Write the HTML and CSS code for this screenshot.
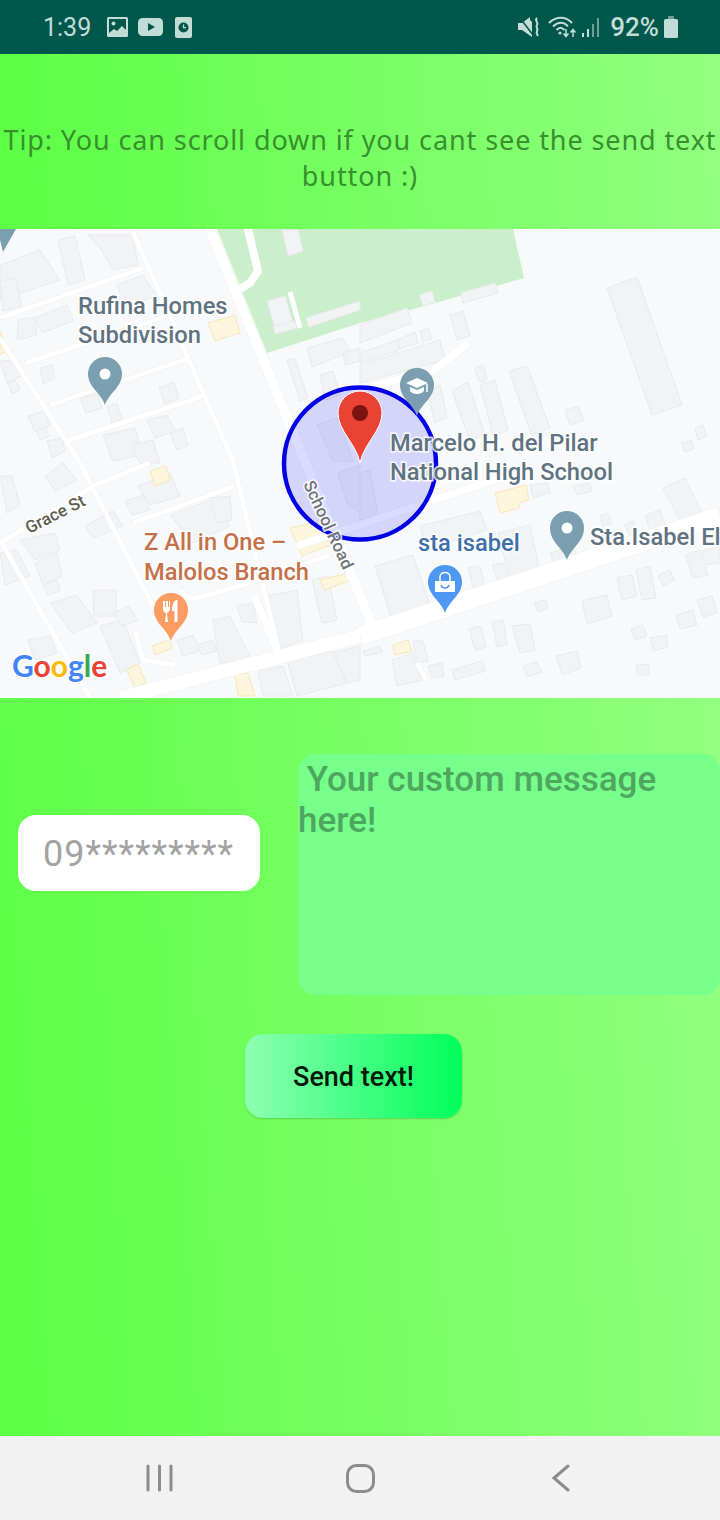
FILE: index.html
```html
<!DOCTYPE html>
<html lang="en">
<head>
    <meta charset="UTF-8">
    <meta name="viewport" content="width=device-width, initial-scale=1.0">
    <title>Send text</title>
    <link rel="stylesheet" href="styles.css">
</head>
<body>
    <div class="phone">
        <div class="status-bar">
            <div class="status-left">
                <span class="clock">1:39</span>
                <svg class="ic-image" width="21" height="20" viewBox="0 0 21 20">
                    <rect width="21" height="20" rx="1.5" fill="#c3dcd6"/>
                    <path d="M2 2h17v11l-4-4-5 5-3-2-5 4z" fill="#00574b"/>
                    <circle cx="6.500" cy="6.500" r="2" fill="#c3dcd6"/>
                </svg>
                <svg class="ic-video" width="25" height="18" viewBox="0 0 25 18">
                    <rect width="25" height="18" rx="4.5" fill="#c3dcd6"/>
                    <path d="M10 5l7 4-7 4z" fill="#00574b"/>
                </svg>
                <svg class="ic-alarm" width="17" height="21" viewBox="0 0 17 21">
                    <rect width="17" height="21" rx="2" fill="#c3dcd6"/>
                    <circle cx="8.500" cy="10.500" r="5" fill="#00574b"/>
                    <path d="M8.500 7.500v3.200h2.500" fill="none" stroke="#c3dcd6" stroke-width="1.300"/>
                </svg>
            </div>
            <div class="status-right">
                <svg class="ic-mute" width="22" height="20" viewBox="0 0 22 20">
                    <path d="M0 6h4l8-6v3l2 2v15l-10-7H0z" fill="#c3dcd6"/>
                    <path d="M2 1l13 17" stroke="#00574b" stroke-width="1.500"/>
                    <path d="M19 1c-3 3 2 4 0 7-2 2 2 4 0 6-1 2 0 3 1 5" fill="none" stroke="#c3dcd6" stroke-width="2"/>
                </svg>
                <svg class="ic-wifi" width="28" height="22" viewBox="0 0 28 22">
                    <path d="M1 7c7-7 17-7 23 0M5 10.500c5-5 11-5 15 0M8.500 14c3-3 5-3 8 0" fill="none" stroke="#c3dcd6" stroke-width="2"/>
                    <circle cx="12" cy="17" r="1.600" fill="#c3dcd6"/>
                    <path d="M18 13v7M15.500 17.500l2.500 3 2.500-3M25 21v-7M22.500 16.500l2.500-3 2.500 3" fill="none" stroke="#c3dcd6" stroke-width="1.500"/>
                </svg>
                <svg class="ic-signal" width="18" height="19" viewBox="0 0 18 19">
                    <rect x="0" y="15" width="2" height="4" fill="#c3dcd6"/>
                    <rect x="5" y="11" width="2" height="8" fill="#c3dcd6"/>
                    <rect x="10" y="6" width="2" height="13" fill="#6f9f97"/>
                    <rect x="15" y="0" width="2" height="19" fill="#6f9f97"/>
                </svg>
                <span class="battery-pct">92%</span>
                <svg class="ic-battery" width="14" height="22" viewBox="0 0 14 22">
                    <path d="M4 0h6v3H4z" fill="#6f9f97"/>
                    <rect y="3" width="14" height="19" rx="1.500" fill="#c3dcd6"/>
                </svg>
            </div>
        </div>

        <div class="tip-panel">
            <p class="tip-text">Tip: You can scroll down if you cant see the send text button :)</p>
        </div>

        <svg class="map" width="720" height="469" viewBox="0 229 720 469">
            <rect x="0" y="229" width="720" height="469" fill="#f8f9fb"/>

            <polygon class="park" points="217,229 513,229 524,278 410,310 360,323 267,353"/>
            <path class="street-thin" d="M247,225 L258,271 L250,283 L238,290"/>
            <path class="street-thin park-lane" d="M290,292 L300,328"/>

            <g class="blocks">
                <polygon points="607,288 637,277 682,405 652,415"/>
                <polygon points="450,315 463,311 470,336 457,340"/>
                <polygon points="475,368 483,365 487,380 479,382"/>
                <polygon points="509,371 527,366 550,428 532,436"/>
                <polygon points="480,385 495,380 508,430 493,435"/>
                <polygon points="452,391 468,382 485,435 470,441"/>
                <polygon points="565,410 578,406 584,420 570,425"/>
                <polygon points="427,391 440,385 447,418 435,423"/>
                <polygon points="695,428 703,425 707,436 698,440"/>
                <polygon points="682,443 691,440 694,449 685,452"/>
                <polygon points="461,293 495,283 498,293 463,303"/>
                <polygon points="419,295 432,291 435,302 423,306"/>
                <polygon points="360,325 407,308 412,323 360,343"/>
                <polygon points="360,353 397,340 400,350 360,363"/>
                <polygon points="397,340 415,332 418,343 400,349"/>
                <polygon points="420,331 428,328 432,339 423,342"/>
                <polygon points="360,365 440,340 445,360 360,383"/>
                <polygon points="663,488 685,478 702,513 680,521"/>
                <polygon points="645,515 660,510 668,533 652,538"/>
                <polygon points="600,516 608,513 612,523 603,526"/>
                <polygon points="625,525 633,521 640,538 632,541"/>
                <polygon points="530,485 548,483 550,493 533,498"/>
                <polygon points="573,486 590,483 592,491 577,495"/>
                <polygon points="420,526 480,511 487,530 427,550"/>
                <polygon points="498,533 530,525 540,573 510,580"/>
                <polygon points="550,553 573,546 580,565 557,571"/>
                <polygon points="375,566 413,555 432,611 393,623"/>
                <polygon points="468,568 480,566 486,591 475,594"/>
                <polygon points="492,565 503,563 512,588 502,591"/>
                <polygon points="685,555 700,550 708,575 693,578"/>
                <polygon points="702,551 720,546 720,563 707,565"/>
                <polygon points="617,578 632,575 637,596 622,600"/>
                <polygon points="636,570 650,566 656,598 642,600"/>
                <polygon points="658,575 670,570 674,580 663,586"/>
                <polygon points="582,601 607,595 612,616 587,624"/>
                <polygon points="534,603 545,600 548,608 538,612"/>
                <polygon points="697,600 712,596 717,613 703,617"/>
                <polygon points="676,615 693,610 697,625 680,629"/>
                <polygon points="631,629 643,625 647,636 635,640"/>
                <polygon points="650,638 667,635 668,647 653,651"/>
                <polygon points="636,665 649,664 649,675 637,675"/>
                <polygon points="556,656 577,651 581,668 562,675"/>
                <polygon points="523,666 537,662 542,672 527,677"/>
                <polygon points="452,670 482,661 485,671 455,680"/>
                <polygon points="428,666 442,663 444,676 432,678"/>
                <polygon points="392,660 413,653 422,680 397,686"/>
                <polygon points="512,626 530,624 535,650 520,653"/>
                <polygon points="492,622 503,620 507,645 497,647"/>
                <polygon points="469,629 481,626 486,647 475,650"/>
                <polygon points="413,641 423,641 428,661 418,663"/>
                <polygon points="363,651 380,646 383,652 365,656"/>
                <polygon points="58,240 75,236 85,280 68,285"/>
                <polygon points="88,235 133,235 138,265 113,270 100,248"/>
                <polygon points="0,265 40,250 60,280 0,300"/>
                <polygon points="0,281 15,278 22,306 3,311"/>
                <polygon points="117,285 143,275 157,296 125,306"/>
                <polygon points="18,320 35,317 37,335 17,340"/>
                <polygon points="35,318 67,305 73,321 42,333"/>
                <polygon points="40,368 52,365 55,378 43,384"/>
                <polygon points="159,388 174,382 179,398 165,404"/>
                <polygon points="80,398 97,393 102,408 86,413"/>
                <polygon points="107,406 117,404 122,420 112,423"/>
                <polygon points="0,361 13,360 22,376 7,383"/>
                <polygon points="8,383 15,380 20,390 12,394"/>
                <polygon points="28,416 45,411 50,426 35,432"/>
                <polygon points="37,431 45,427 49,436 40,440"/>
                <polygon points="147,420 167,415 175,431 155,438"/>
                <polygon points="170,433 183,428 188,445 177,450"/>
                <polygon points="103,435 135,428 143,455 113,461"/>
                <polygon points="132,445 153,440 160,463 140,463"/>
                <polygon points="47,441 62,438 65,451 52,458"/>
                <polygon points="282,230 298,230 303,251 288,256"/>
                <polygon points="267,301 285,296 293,323 275,328"/>
                <polygon points="273,326 295,321 297,328 275,334"/>
                <polygon points="306,318 360,301 360,310 309,327"/>
                <polygon points="307,348 343,338 350,352 312,367"/>
                <polygon points="287,360 295,358 308,398 300,401"/>
                <polygon points="320,375 333,371 340,395 325,400"/>
                <polygon points="343,353 360,348 360,361 345,365"/>
                <polygon points="317,425 337,418 353,461 333,461"/>
                <polygon points="338,473 360,465 360,513 347,503"/>
                <polygon points="360,473 370,470 378,515 360,520"/>
                <polygon points="125,501 143,495 150,510 132,515"/>
                <polygon points="138,486 170,473 180,496 150,505"/>
                <polygon points="170,515 210,500 230,526 193,543"/>
                <polygon points="210,498 230,496 232,520 217,523"/>
                <polygon points="85,526 113,511 123,526 93,538"/>
                <polygon points="45,476 63,463 77,480 55,491"/>
                <polygon points="0,476 12,476 20,505 7,513"/>
                <polygon points="20,540 55,533 60,550 35,560"/>
                <polygon points="0,553 17,550 30,576 5,585"/>
                <polygon points="35,563 57,553 62,576 43,585"/>
                <polygon points="43,585 57,580 60,591 48,595"/>
                <polygon points="93,590 116,590 116,616 94,616"/>
                <polygon points="50,603 77,595 97,623 72,633"/>
                <polygon points="100,626 123,620 140,663 120,673"/>
                <polygon points="113,613 128,606 138,620 122,626"/>
                <polygon points="28,640 50,636 57,653 35,660"/>
                <polygon points="213,620 230,616 252,660 220,663"/>
                <polygon points="237,606 253,603 257,623 242,622"/>
                <polygon points="267,596 297,590 303,640 275,651"/>
                <polygon points="312,580 328,576 337,620 322,623"/>
                <polygon points="177,640 193,635 200,651 183,656"/>
                <polygon points="197,645 213,640 217,651 202,655"/>
                <polygon points="258,671 283,666 293,696 263,696"/>
                <polygon points="287,660 333,651 347,683 297,696"/>
                <polygon points="333,653 360,646 360,680 347,683"/>
            </g>

            <g class="food-blocks">
                <polygon points="495,493 526,485 529,500 520,502 519,508 500,513"/>
                <polygon points="393,645 408,640 412,651 395,655"/>
                <polygon points="208,323 235,315 240,333 215,341"/>
                <polygon points="0,331 9,351 0,354"/>
                <polygon points="150,471 166,466 170,480 155,486"/>
                <polygon points="290,528 317,522 330,545 302,556"/>
                <polygon points="320,580 348,573 351,580 325,590"/>
                <polygon points="152,646 168,640 173,648 155,655"/>
                <polygon points="127,670 138,664 146,683 135,688"/>
                <polygon points="235,675 248,673 255,696 238,696"/>
            </g>

            <g class="streets">
                <path class="street-wide" d="M208,225 L283,408 L375,632"/>
                <path class="street-main" d="M120,698 L360,636"/>
                <path class="street-main street-main-r" d="M360,636 L720,516"/>
                <path class="street-thin" d="M300,545 L500,478"/>
                <path class="street-thin" d="M377,385 L433,371 L466,345"/>
                <path d="M133,232 L233,461 L279,652"/>
                <path d="M0,338 L80,463 L170,640"/>
                <path d="M0,540 L90,698"/>
                <path d="M0,318 L143,268"/>
                <path d="M25,363 L177,313"/>
                <path d="M50,405 L190,358"/>
                <path d="M67,441 L207,395"/>
                <path d="M0,543 L93,486 L150,463"/>
                <path d="M133,523 L235,486"/>
                <path d="M135,630 L143,660 L175,665"/>
                <path class="street-thin" d="M255,598 L277,650"/>
                <path d="M180,590 L190,600 L250,583 L330,555"/>
                <path d="M417,663 L427,681"/>
            </g>

            <path class="pin-gray" d="M0,229 L16,229 L3,252 L0,240 Z"/>

            <circle class="radius" cx="360" cy="463.500" r="76"/>

            <g class="pin-gray">
                <path d="M105,405 C101,393 88,387 88,374 A17,17 0 0 1 122,374 C122,387 109,393 105,405 Z"/>
                <path d="M567,560 C563,548 550,542 550,528 A17,17 0 0 1 584,528 C584,542 571,548 567,560 Z"/>
                <path d="M417,416 C413,404 400,398 400,385 A17,17 0 0 1 434,385 C434,398 421,404 417,416 Z"/>
            </g>
            <circle cx="105" cy="374" r="5.500" fill="#fff"/>
            <circle cx="567" cy="528" r="5.500" fill="#fff"/>
            <path d="M406,383 L417,378 L428,383 L417,388 Z M410,387 V391 C413,395 421,395 424,391 V387 L417,390 Z" fill="#fff"/>
            <path d="M427,384 V392" stroke="#fff" stroke-width="1.500"/>

            <path d="M445,613 C441,601 428,595 428,582 A17,17 0 0 1 462,582 C462,595 449,601 445,613 Z" fill="#4e97f3"/>
            <path d="M435,581 H455 V591 C455,592 454,592 454,592 H436 C435,592 435,592 435,591 Z" fill="#fff"/>
            <path d="M440,581 V577 C440,571 450,571 450,577 V581" fill="none" stroke="#fff" stroke-width="1.500"/>
            <path d="M441,585 C442,589 448,589 449,585" fill="none" stroke="#4e97f3" stroke-width="1.500"/>

            <path d="M171,641 C167,629 154,623 154,610 A17,17 0 0 1 188,610 C188,623 175,629 171,641 Z" fill="#fb9c62"/>
            <path d="M163,601 V609 C163,612 166,612 166,614 L165,622 H168 L167,614 C167,612 170,612 170,609 V601 H169 V607 H168 V601 H166 V607 H165 V601 Z" fill="#fff"/>
            <path d="M176,600 C173,602 172,606 172,611 H174.500 L174.500,622 H177.500 V600 Z" fill="#fff"/>

            <path class="pin-red" d="M360,463 C356,443 338,431 338,413 A22,22 0 0 1 382,413 C382,431 364,443 360,463 Z"/>
            <circle cx="360" cy="413" r="8" fill="#7b1410"/>

            <g class="labels">
                <text class="label" x="78" y="314">Rufina Homes</text>
                <text class="label" x="78" y="343">Subdivision</text>
                <text class="label" x="390" y="451">Marcelo H. del Pilar</text>
                <text class="label" x="390" y="480">National High School</text>
                <text class="label" x="590" y="545">Sta.Isabel El</text>
                <text class="label label-shop" x="418" y="551">sta isabel</text>
                <text class="label label-food" x="144" y="550">Z All in One –</text>
                <text class="label label-food" x="144" y="580">Malolos Branch</text>
                <text class="label label-road" transform="translate(29 534) rotate(-27)">Grace St</text>
                <text class="label label-school-road" transform="translate(303 484) rotate(65)">School Road</text>
            </g>

            <text class="google" x="12" y="677"><tspan fill="#4285f4">G</tspan><tspan fill="#ea4335">o</tspan><tspan fill="#fbbc05">o</tspan><tspan fill="#4285f4">g</tspan><tspan fill="#34a853">l</tspan><tspan fill="#ea4335">e</tspan></text>
        </svg>

        <div class="form-panel">
            <div class="fields">
                <div class="phone-input">09*********</div>
                <div class="message-input"> Your custom message here!</div>
            </div>
            <button class="send-btn" type="button">Send text!</button>
        </div>

        <div class="nav-bar">
            <svg width="27" height="28" viewBox="0 0 27 28">
                <path d="M2 2v24M13.500 2v24M25 2v24" fill="none" stroke="#8c8c8c" stroke-width="3" stroke-linecap="round"/>
            </svg>
            <svg width="29" height="29" viewBox="0 0 29 29">
                <rect x="1.500" y="1.500" width="26" height="26" rx="9" fill="none" stroke="#8c8c8c" stroke-width="3"/>
            </svg>
            <svg width="18" height="28" viewBox="0 0 18 28">
                <path d="M16 2L2 14l14 12" fill="none" stroke="#8c8c8c" stroke-width="3" stroke-linecap="round"/>
            </svg>
        </div>
    </div>
</body>
</html>
```

FILE: styles.css
```css
body {
    margin: 0;
    padding: 0;
    font-family: 'Roboto', sans-serif;
}
.phone {
    width: 720px;
    height: 1520px;
    display: flex;
    flex-direction: column;
    overflow: hidden;
}

.status-bar {
    height: 54px;
    flex: none;
    background-color: #00574b;
    color: #c3dcd6;
    display: flex;
    justify-content: space-between;
    align-items: center;
    padding: 0 42px 0 43px;
}
.status-left,
.status-right {
    display: flex;
    align-items: center;
}
.clock {
    font-size: 25px;
    margin-right: 16px;
}
.ic-image {
    margin-right: 10px;
}
.ic-video {
    margin-right: 12px;
}
.ic-wifi {
    margin: 0 6px 0 8px;
}
.ic-signal {
    margin-right: 10px;
}
.battery-pct {
    font-size: 26px;
    font-weight: 500;
    margin-right: 5px;
}

.tip-panel {
    height: 175px;
    box-sizing: border-box;
    padding-top: 32px;
    flex: none;
    background: linear-gradient(87deg, #5cff45, #92ff80);
    display: flex;
    align-items: center;
    justify-content: center;
}
.tip-text {
    margin: 0;
    font-family: 'Noto Sans', sans-serif;
    font-size: 27px;
    line-height: 36px;
    letter-spacing: 0.9px;
    text-align: center;
    color: #38902e;
}

.map {
    display: block;
    flex: none;
}
.park {
    fill: #cbeecb;
}
.blocks polygon {
    fill: #f2f3f5;
    stroke: #e9eaec;
    stroke-width: 1;
}
.food-blocks polygon {
    fill: #fdf6dd;
    stroke: #f7e8b8;
    stroke-width: 1;
}
.streets {
    filter: drop-shadow(0 0 0.6px #d4d5d8);
}
.streets path,
.street-thin {
    fill: none;
    stroke: #fff;
    stroke-width: 5;
}
.streets .street-thin,
.street-thin {
    stroke-width: 8;
    stroke-linecap: round;
}
.park-lane {
    stroke-width: 5;
    stroke-linecap: butt;
}
.streets .street-wide {
    stroke-width: 10;
}
.streets .street-main {
    stroke-width: 14;
}
.streets .street-main-r {
    stroke-width: 19;
}
.radius {
    fill: rgba(0, 0, 255, 0.14);
    stroke: #0000e6;
    stroke-width: 4.5;
}
.pin-gray {
    fill: #7b9eb0;
}
.pin-red {
    fill: #ea4335;
    stroke: #fff;
    stroke-width: 1;
}
.label {
    font-family: 'Roboto', sans-serif;
    font-size: 23.7px;
    font-weight: 500;
    fill: #5f7380;
    stroke: rgba(255, 255, 255, 0.85);
    stroke-width: 3;
    paint-order: stroke;
}
.label-shop {
    fill: #3f6fa8;
}
.label-food {
    fill: #c4714a;
}
.label-road {
    font-size: 17px;
    fill: #5d5d50;
}
.label-school-road {
    font-size: 17px;
    fill: #70757a;
}
.google {
    font-family: 'Lato', sans-serif;
    font-size: 30px;
    font-weight: 700;
    stroke: rgba(255, 255, 255, 0.8);
    stroke-width: 2;
    paint-order: stroke;
}

.form-panel {
    flex: 1;
    background: linear-gradient(86deg, #5cff45, #92ff80);
    display: flex;
    flex-direction: column;
    padding-top: 56px;
}
.fields {
    display: flex;
    align-items: flex-start;
    justify-content: space-between;
    padding-left: 18px;
}
.phone-input {
    width: 242px;
    height: 76px;
    margin-top: 61px;
    box-sizing: border-box;
    padding: 2px 0 0 25px;
    background-color: #fff;
    border-radius: 18px;
    color: #a3a3a3;
    font-size: 36px;
    letter-spacing: 1px;
    line-height: 74px;
}
.message-input {
    width: 422px;
    height: 241px;
    box-sizing: border-box;
    background-color: #76ff8a;
    border-radius: 18px;
    color: #4fa65f;
    font-size: 35px;
    font-weight: 500;
    line-height: 41px;
    white-space: pre-wrap;
    overflow: hidden;
    padding: 5px 0 0 0;
}
.send-btn {
    align-self: flex-start;
    width: 217px;
    height: 84px;
    margin: 39px 0 0 245px;
    padding: 2px 0 0 0;
    border: none;
    border-radius: 18px;
    background: linear-gradient(to right, #8dffb0, #00ff5a);
    box-shadow: 0 1px 2px rgba(0, 0, 0, 0.2);
    color: #01180a;
    font-family: 'Roboto', sans-serif;
    font-size: 27px;
    font-weight: 500;
}

.nav-bar {
    height: 84px;
    flex: none;
    background-color: #f2f2f2;
    display: grid;
    grid-template-columns: repeat(3, 201px);
    justify-content: center;
    justify-items: center;
    align-items: center;
}
```
